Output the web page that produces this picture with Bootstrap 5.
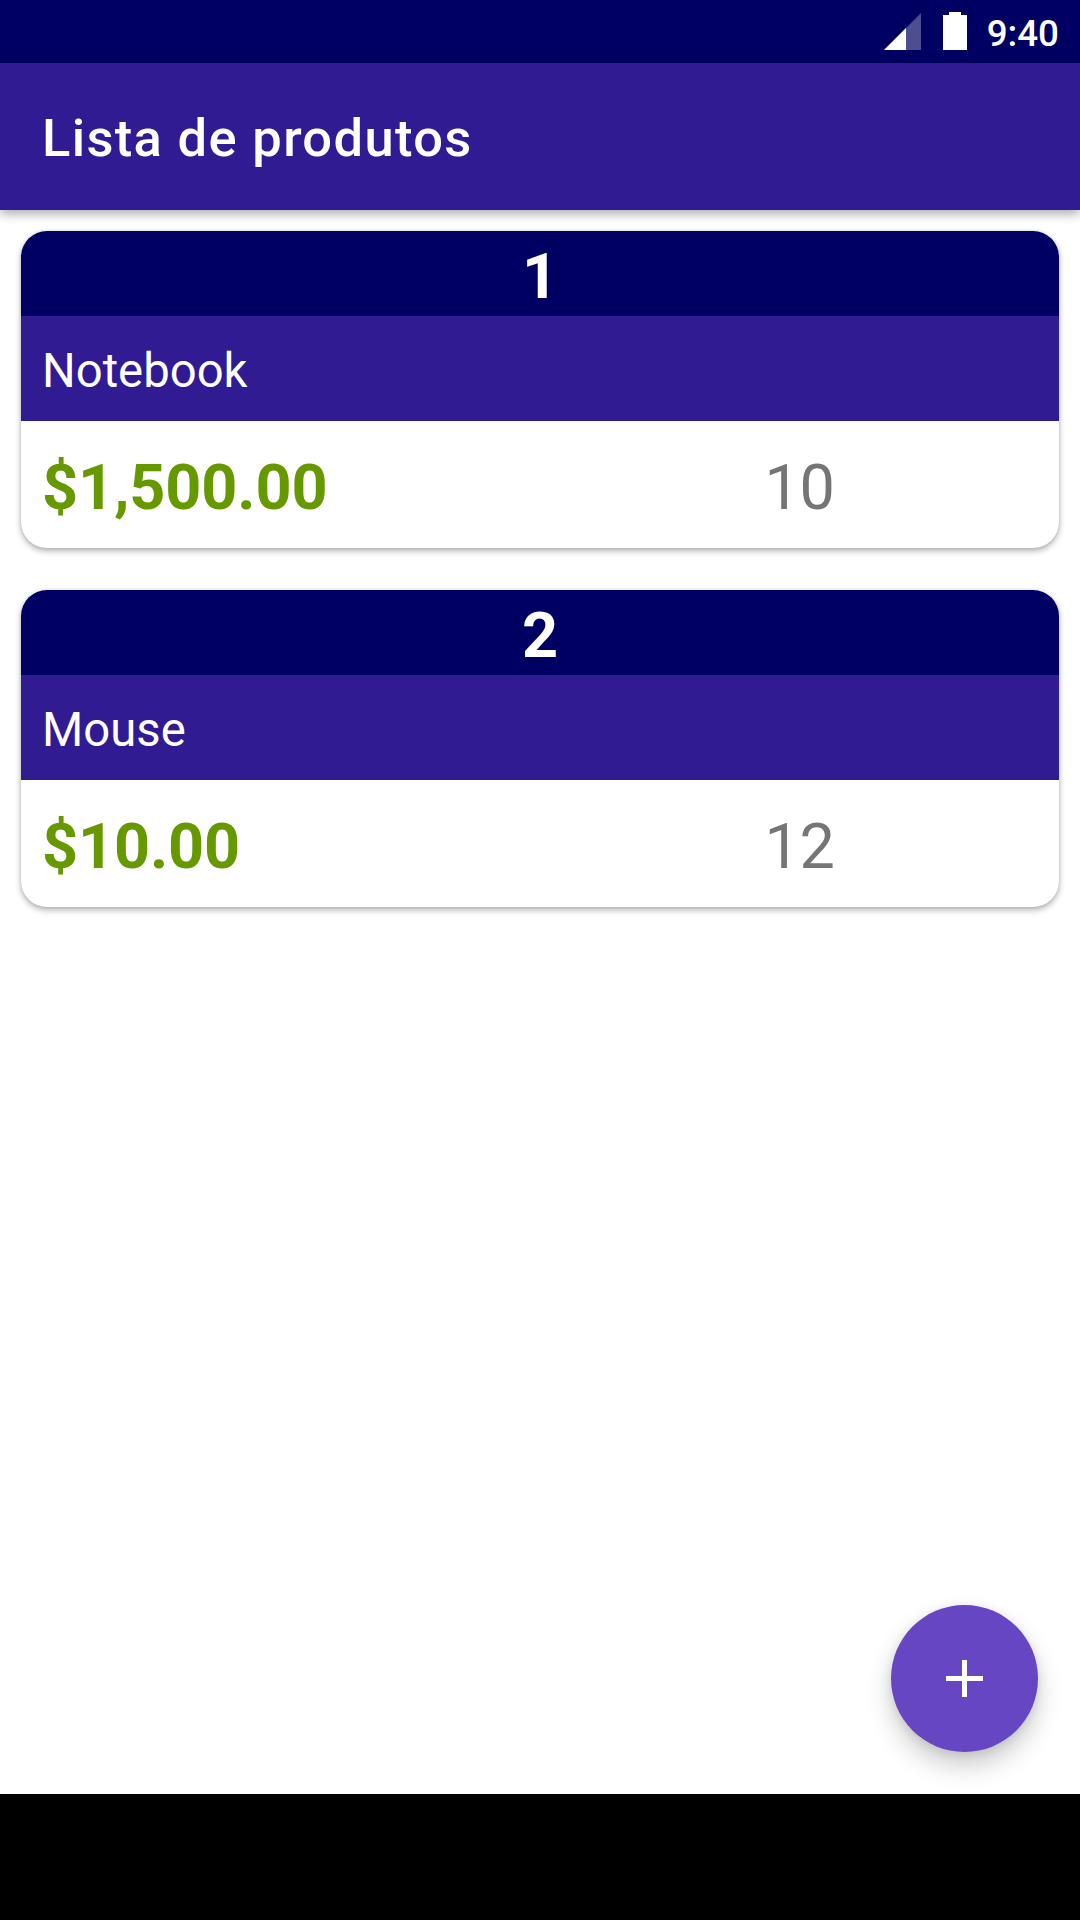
<!DOCTYPE html>
<html lang="pt-BR">
<head>
<meta charset="utf-8">
<meta name="viewport" content="width=device-width, initial-scale=1">
<title>Lista de produtos</title>
<link href="https://cdn.jsdelivr.net/npm/bootstrap@5.3.0/dist/css/bootstrap.min.css" rel="stylesheet">
<style>
  body { font-family: Roboto, "Liberation Sans", sans-serif; background: #fff; }
  .screen { height: 1920px; }
  .status-strip { height: 63px; padding-right: 21px; background: #000063; color: #fff; }
  .status-strip svg { display: block; }
  .signal-icon { margin-right: 22px; }
  .battery-icon { margin-right: 20px; }
  .clock { font-size: 36.75px; font-weight: 500; line-height: 63px; padding-top: 2px; }
  .app-bar { height: 147px; padding: 4px 42px 0; background: #311b92; box-shadow: 0 4px 10px rgba(0,0,0,.33); z-index: 1; }
  .app-title { font-size: 52.5px; font-weight: 500; letter-spacing: 1.33px; line-height: 1.2; color: #fff; }
  .product-list { padding: 21px; gap: 42px; }
  .product { border: 0; border-radius: 26px; overflow: hidden; box-shadow: 0 3px 6px rgba(0,0,0,.3), 0 0 3px rgba(0,0,0,.12); }
  .product-id { height: 85px; padding-top: 4px; background: #000063; color: #fff; font-size: 63px; line-height: 84px; }
  .product-name { height: 105px; padding: 4px 21px 0; background: #311b92; color: #fff; font-size: 47.25px; line-height: 102px; }
  .product-data { height: 127px; padding-top: 6px; font-size: 63px; line-height: 122px; }
  .price { padding-left: 21px; color: #690; letter-spacing: -.15px; }
  .qty { color: #757575; letter-spacing: -.3px; }
  .fab { right: 42px; bottom: 42px; width: 147px; height: 147px; background: #6746c3; box-shadow: 0 14px 26px rgba(0,0,0,.2), 0 2px 10px rgba(0,0,0,.1); }
  .system-nav { height: 126px; background: #000; }
</style>
</head>
<body>
<div class="screen d-flex flex-column">
  <div class="status-strip d-flex justify-content-end">
    <svg class="signal-icon" width="37" height="63" viewBox="0 0 37 63"><path d="M0 50 37 13V50Z" fill="#fff" fill-opacity=".3"/><path d="M0 50 22 28V50Z" fill="#fff"/></svg>
    <svg class="battery-icon" width="24" height="63" viewBox="0 0 24 63"><path d="M6 12H18V15H24V50H0V15H6Z" fill="#fff"/></svg>
    <span class="clock">9:40</span>
  </div>
  <header class="app-bar d-flex align-items-center position-relative">
    <h1 class="app-title m-0">Lista de produtos</h1>
  </header>
  <main class="flex-grow-1 position-relative">
    <div class="product-list d-flex flex-column">
      <article class="card product">
        <div class="product-id text-center fw-bold">1</div>
        <div class="product-name">Notebook</div>
        <div class="product-data row g-0">
          <div class="price col-6 fw-bold">$1,500.00</div>
          <div class="qty col-6 text-center">10</div>
        </div>
      </article>
      <article class="card product">
        <div class="product-id text-center fw-bold">2</div>
        <div class="product-name">Mouse</div>
        <div class="product-data row g-0">
          <div class="price col-6 fw-bold">$10.00</div>
          <div class="qty col-6 text-center">12</div>
        </div>
      </article>
    </div>
    <button class="fab btn border-0 rounded-circle p-0 position-absolute d-flex align-items-center justify-content-center" type="button" aria-label="Adicionar">
      <svg width="37" height="37" viewBox="0 0 37 37"><path d="M16 0H21V16H37V21H21V37H16V21H0V16H16Z" fill="#fff"/></svg>
    </button>
  </main>
  <div class="system-nav"></div>
</div>
<script src="https://cdn.jsdelivr.net/npm/bootstrap@5.3.0/dist/js/bootstrap.bundle.min.js"></script>
</body>
</html>
